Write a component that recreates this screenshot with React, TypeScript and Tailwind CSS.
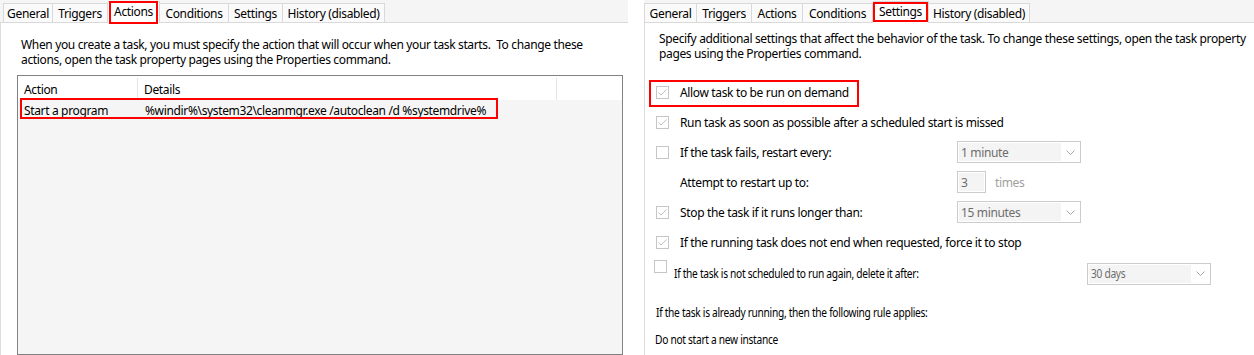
import clsx from 'clsx';

type Tab = { label: string; w: string };

const leftTabs: Tab[] = [
  { label: 'General', w: 'w-[50px]' },
  { label: 'Triggers', w: 'w-[55px]' },
  { label: 'Actions', w: 'w-[52px]' },
  { label: 'Conditions', w: 'w-[69px]' },
  { label: 'Settings', w: 'w-[54px]' },
  { label: 'History (disabled)', w: 'w-[102px]' },
];

const rightTabs: Tab[] = [
  { label: 'General', w: 'w-[53px]' },
  { label: 'Triggers', w: 'w-[55px]' },
  { label: 'Actions', w: 'w-[51px]' },
  { label: 'Conditions', w: 'w-[70px]' },
  { label: 'Settings', w: 'w-[56px]' },
  { label: 'History (disabled)', w: 'w-[101px]' },
];

function TabStrip({ tabs, active, pad, redBox }: { tabs: Tab[]; active: string; pad: string; redBox: string }) {
  return (
    <div className={clsx('h-[23px] bg-[#f5f5f5] border-b border-[#d9d9d9] flex items-end', pad)}>
      {tabs.map((t, i) => {
        const on = t.label === active;
        return (
          <div
            key={t.label}
            className={clsx(
              'relative flex items-center justify-center border-t border-r border-[#d9d9d9] whitespace-nowrap',
              t.w,
              i === 0 && 'border-l',
              on ? 'h-[22px] -mb-px bg-white pb-[2px]' : 'h-[19px] bg-[#fafafa]'
            )}
          >
            {t.label}
            {on && <span className={clsx('absolute border-2 border-[#f00]', redBox)} />}
          </div>
        );
      })}
    </div>
  );
}

function Check({ checked, className }: { checked?: boolean; className?: string }) {
  return (
    <span className={clsx('w-[13px] h-[13px] border border-[#c6c6c6] bg-white shrink-0 flex items-center justify-center', className)}>
      {checked && (
        <svg width="11" height="11" viewBox="0 0 11 11">
          <polyline points="1.5,5.5 4,8 9.5,2.5" fill="none" stroke="#bfbfbf" strokeWidth="1" />
        </svg>
      )}
    </span>
  );
}

function Dropdown({ value, narrow }: { value: string; narrow?: boolean }) {
  return (
    <div className="w-[124px] h-[22px] border border-[#cccccc] bg-white flex p-px">
      <div className="flex-1 bg-[#f4f4f4] text-[#6d6d6d] flex items-center pl-[2px] overflow-hidden">
        <span className={clsx('whitespace-nowrap', narrow && 'inline-block origin-left scale-x-85')}>{value}</span>
      </div>
      <div className="w-[18px] flex items-center justify-center">
        <svg width="9" height="5" viewBox="0 0 9 5">
          <polyline points="0.5,0.5 4.5,4.5 8.5,0.5" fill="none" stroke="#a6a6a6" strokeWidth="1" />
        </svg>
      </div>
    </div>
  );
}

function Row({ checked, label, children }: { checked?: boolean; label: string; children?: React.ReactNode }) {
  return (
    <div className="h-[30px] flex items-center">
      {checked === undefined ? <span className="w-[13px] shrink-0" /> : <Check checked={checked} />}
      <span className="ml-[11px] w-[277px] whitespace-nowrap">{label}</span>
      {children}
    </div>
  );
}

export default function App() {
  return (
    <div className="w-[1254px] h-[355px] overflow-hidden bg-white flex text-[12px] text-black tracking-[-0.35px] font-['Noto_Sans','Open_Sans',sans-serif] leading-[15px]">
      {/* Actions tab */}
      <div className="w-[628px] flex flex-col shrink-0">
        <TabStrip tabs={leftTabs} active="Actions" pad="pl-[3px]" redBox="left-[1px] right-[1px] -top-[1px] -bottom-[1px]" />
        <div className="flex-1 border-l border-[#dcdcdc] flex flex-col">
          <p className="pl-[20px] pt-[14px] whitespace-pre">
            {'When you create a task, you must specify the action that will occur when your task starts.  To change these\nactions, open the task property pages using the Properties command.'}
          </p>
          <div className="ml-[16px] mr-[5px] mt-[8px] flex-1 border border-[#828282] bg-[#f5f5f5] flex flex-col">
            <div className="h-[24px] pt-[2px] bg-white flex shrink-0">
              <div className="w-[120px] border-r border-[#e5e5e5] pl-[6px] flex items-center">Action</div>
              <div className="w-[419px] border-r border-[#e5e5e5] pl-[6px] flex items-center">Details</div>
            </div>
            <div className="relative h-[20px] flex items-center">
              <span className="w-[120px] pl-[6px]">Start a program</span>
              <span className="pl-[7px] whitespace-nowrap">%windir%\system32\cleanmgr.exe /autoclean /d %systemdrive%</span>
              <span className="absolute left-[2px] w-[478px] -top-[2px] h-[21px] border-2 border-[#f00]" />
            </div>
          </div>
        </div>
      </div>

      <div className="w-[16px] shrink-0" />

      {/* Settings tab */}
      <div className="flex-1 flex flex-col">
        <TabStrip tabs={rightTabs} active="Settings" pad="pl-[0px]" redBox="left-[0px] right-[0px] top-[0px] bottom-[1px]" />
        <div className="flex-1 border-l border-[#dcdcdc] pl-[11px]">
          <p className="pl-[3px] pt-[8px] whitespace-pre">
            {'Specify additional settings that affect the behavior of the task. To change these settings, open the task property\npages using the Properties command.'}
          </p>
          <div className="mt-[16px] flex flex-col">
            <div className="relative">
              <Row checked label="Allow task to be run on demand" />
              <span className="absolute -left-[7px] top-[3px] w-[210px] h-[27px] border-2 border-[#f00]" />
            </div>
            <Row checked label="Run task as soon as possible after a scheduled start is missed" />
            <Row checked={false} label="If the task fails, restart every:">
              <Dropdown value="1 minute" />
            </Row>
            <Row label="Attempt to restart up to:">
              <div className="w-[29px] h-[22px] border border-[#cccccc] p-px">
                <div className="h-full bg-[#f4f4f4] text-[#6d6d6d] pl-[2px] flex items-center">3</div>
              </div>
              <span className="ml-[9px] text-[#a0a0a0]">times</span>
            </Row>
            <Row checked label="Stop the task if it runs longer than:">
              <Dropdown value="15 minutes" />
            </Row>
            <Row checked label="If the running task does not end when requested, force it to stop" />
            <div className="h-[30px] flex items-center">
              <Check checked={false} className="-ml-[2px] self-start mt-[3px]" />
              <span className="ml-[7px] w-[413px] whitespace-nowrap mt-[3px]">
                <span className="inline-block origin-left scale-x-85">If the task is not scheduled to run again, delete it after:</span>
              </span>
              <div className="mt-[3px]">
                <Dropdown value="30 days" narrow />
              </div>
            </div>
            <p className="mt-[18px] h-[15px] whitespace-nowrap">
              <span className="inline-block origin-left scale-x-85">If the task is already running, then the following rule applies:</span>
            </p>
            <p className="mt-[12px] -ml-[1px] whitespace-nowrap">
              <span className="inline-block origin-left scale-x-85">Do not start a new instance</span>
            </p>
          </div>
        </div>
      </div>
    </div>
  );
}
